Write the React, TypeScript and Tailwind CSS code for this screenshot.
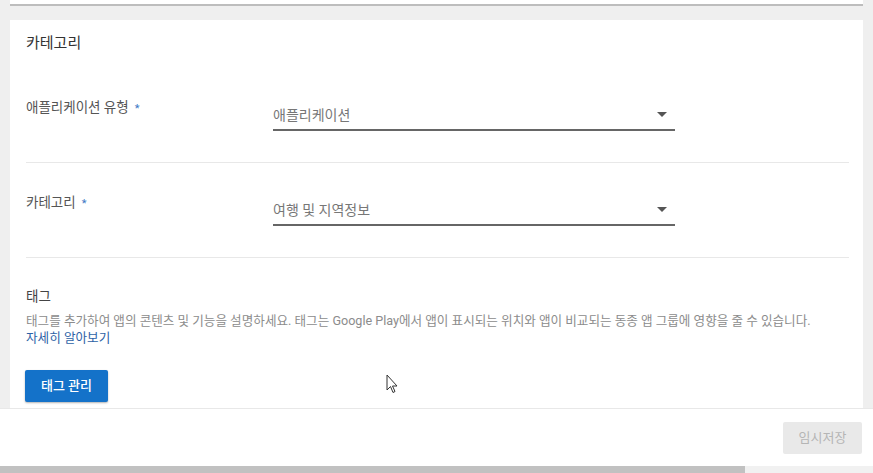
const font = { fontFamily: 'Roboto, "Noto Sans CJK KR", sans-serif' };

const Select = ({ value }: { value: string }) => (
  <div className="w-[402px] mt-[8px] flex items-center justify-between pb-[4px] border-b-2 border-[#666]">
    <span className="text-[14px] leading-5 text-[#777]">{value}</span>
    <svg width="10" height="6" viewBox="0 0 10 6" className="mr-[8px]">
      <path d="M0 0h10L5 5z" fill="#555" />
    </svg>
  </div>
);

const Row = ({ label, value }: { label: string; value: string }) => (
  <div className="flex pt-[29px] pb-[31px] border-b border-[#e8e8e8]">
    <div className="w-[247px] text-[13.5px] leading-5 text-[#555]">
      {label}
      <span className="ml-[6px] text-[#3a78c4] text-[11px]">*</span>
    </div>
    <Select value={value} />
  </div>
);

const App = () => {
  return (
    <div
      className="relative w-[873px] h-[473px] bg-[#efefef] overflow-hidden flex flex-col"
      style={font}
    >
      <div className="mx-[10px] h-[6px] bg-white border-b-2 border-[#bdbdbd] shrink-0" />

      <div className="mt-[14px] ml-[10px] mr-[10px] bg-white pl-4 pr-[14px] flex-1">
        <h2 className="pt-[13px] pb-[15px] text-[15px] leading-5 text-[#333]">카테고리</h2>
        <Row label="애플리케이션 유형" value="애플리케이션" />
        <Row label="카테고리" value="여행 및 지역정보" />

        <div className="pt-[28px]">
          <h3 className="text-[13.5px] leading-5 text-[#444]">태그</h3>
          <p className="mt-[6px] text-[12.6px] leading-[17px] text-[#8c8c8c]">
            태그를 추가하여 앱의 콘텐츠 및 기능을 설명하세요. 태그는 Google Play에서 앱이 표시되는 위치와 앱이 비교되는 동종 앱 그룹에 영향을 줄 수 있습니다.
          </p>
          <a className="block text-[12.6px] leading-[17px] text-[#2d62a6]">자세히 알아보기</a>
          <button className="mt-[24px] -ml-px w-[83px] h-[32px] rounded-[2px] bg-[#1472c9] text-white text-[13px] font-medium shadow-[0_1px_2px_rgba(0,0,0,0.3)]">
            태그 관리
          </button>
        </div>
      </div>

      <div className="h-[58px] shrink-0 bg-white border-t border-[#e8e8e8] flex items-start justify-end pt-[13px] pr-[11px]">
        <button className="w-[79px] h-[32px] rounded-[2px] bg-[#e9e9e9] text-[#b5b5b5] text-[13px]">
          임시저장
        </button>
      </div>

      <div className="h-[7px] shrink-0 flex">
        <div className="w-[745px] bg-[#c1c1c1]" />
        <div className="flex-1 bg-[#f1f1f1]" />
      </div>

      <svg
        className="absolute left-[386px] top-[374px]"
        width="13"
        height="20"
        viewBox="0 0 13 20"
      >
        <path
          d="M1 1v15l3.5-3.5 2.5 6 2-1-2.5-5.5H11z"
          fill="#fff"
          stroke="#333"
          strokeWidth="1"
          strokeLinejoin="round"
        />
      </svg>
    </div>
  );
};

export default App;
